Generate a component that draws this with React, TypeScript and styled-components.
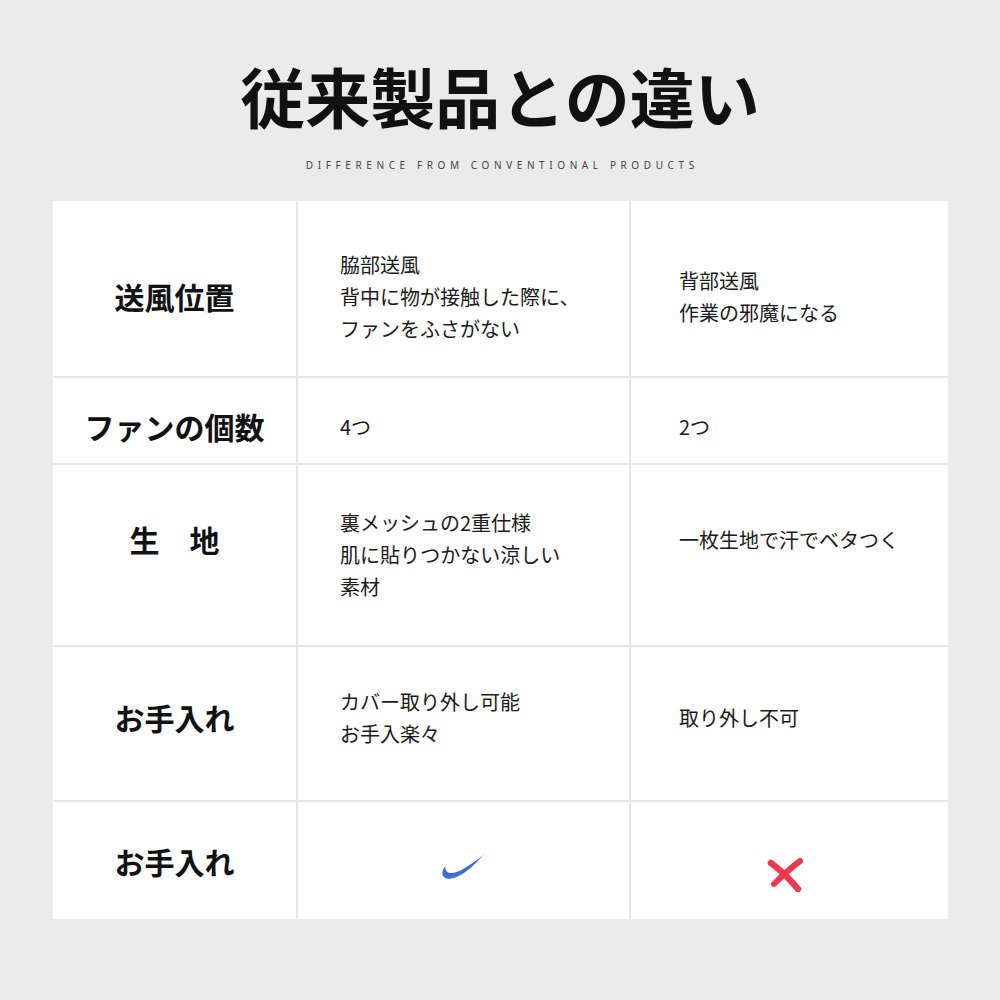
import React from "react";
import styled, { createGlobalStyle } from "styled-components";

const Global = createGlobalStyle`
  html, body { margin: 0; padding: 0; background: #ebebeb; }
  body { font-family: "Noto Sans CJK JP", "Noto Sans", sans-serif; }
`;

const Page = styled.div`
  width: 1000px;
  height: 1000px;
  background: #ebebeb;
  display: flex;
  flex-direction: column;
  align-items: center;
  padding-top: 63px;
  box-sizing: border-box;
`;

const Title = styled.h1`
  margin: 0;
  font-family: "Noto Sans CJK JP", sans-serif;
  font-weight: 700;
  font-size: 65px;
  line-height: 65px;
  color: #111;
`;

const Subtitle = styled.div`
  margin-top: 32px;
  font-family: "Noto Sans", "Liberation Sans", sans-serif;
  font-size: 10px;
  line-height: 11px;
  letter-spacing: 4.6px;
  color: #444;
  padding-left: 4.6px;
`;

const Table = styled.div`
  margin-top: 30px;
  display: grid;
  grid-template-columns: 243px 331px 317px;
  grid-template-rows: 175px 85px 180px 153px 117px;
  gap: 2px;
  background: #e6e6e6;
  width: 895px;
  align-self: flex-start;
  margin-left: 53px;
`;

const Cell = styled.div<{ $shift: number; $pad: number; $center?: boolean }>`
  background: #fff;
  display: flex;
  align-items: center;
  justify-content: ${(p) => (p.$center ? "center" : "flex-start")};
  padding-left: ${(p) => p.$pad}px;
  padding-top: ${(p) => (p.$shift > 0 ? p.$shift * 2 : 0)}px;
  padding-bottom: ${(p) => (p.$shift < 0 ? -p.$shift * 2 : 0)}px;
  box-sizing: border-box;
`;

const Label = styled.div`
  font-family: "Noto Sans CJK JP", sans-serif;
  font-weight: 700;
  font-size: 30px;
  line-height: 36px;
  color: #111;
  text-align: center;
`;

const Body = styled.div`
  font-family: "Noto Sans CJK JP", sans-serif;
  font-weight: 400;
  font-size: 20px;
  line-height: 32px;
  color: #1a1a1a;
  white-space: pre-line;
`;

const Check = () => (
  <svg width="44" height="28" viewBox="0 0 44 28">
    <path
      d="M43 0.5 C35 9 23 22 11 24.5 C5 25.5 0.5 23.5 1.5 17.5 C2 15.5 3 13.5 4.5 12 C3.8 17 6.5 19.5 11.5 19 C20 18 32 9 43 0.5 Z"
      fill="#3b6fd3"
    />
  </svg>
);

const Cross = () => (
  <svg width="40" height="36" viewBox="0 0 40 36">
    <path d="M4 7 C12 13 22 22 31 33" stroke="#ea3a4f" strokeWidth="6.5" strokeLinecap="round" fill="none" />
    <path d="M33 5 C25 11 16 19 7 28" stroke="#ea3a4f" strokeWidth="6" strokeLinecap="round" fill="none" />
  </svg>
);

type Row = {
  label: string;
  shifts: [number, number, number];
  a: React.ReactNode;
  b: React.ReactNode;
  icons?: boolean;
};

const rows: Row[] = [
  {
    label: "送風位置",
    shifts: [7.5, 8.5, 8.5],
    a: "脇部送風\n背中に物が接触した際に、\nファンをふさがない",
    b: "背部送風\n作業の邪魔になる",
  },
  { label: "ファンの個数", shifts: [5.5, 6.5, 6.5], a: "4つ", b: "2つ" },
  {
    label: "生　地",
    shifts: [-16, 0, -15],
    a: "裏メッシュの2重仕様\n肌に貼りつかない涼しい\n素材",
    b: "一枚生地で汗でベタつく",
  },
  {
    label: "お手入れ",
    shifts: [-6.5, -5.5, -5.5],
    a: "カバー取り外し可能\nお手入楽々",
    b: "取り外し不可",
  },
  { label: "お手入れ", shifts: [0.5, 7.5, 13], a: null, b: null, icons: true },
];

export default function App() {
  return (
    <>
      <Global />
      <Page>
        <Title>従来製品との違い</Title>
        <Subtitle>DIFFERENCE FROM CONVENTIONAL PRODUCTS</Subtitle>
        <Table>
          {rows.map((r, i) => (
            <React.Fragment key={i}>
              <Cell $shift={r.shifts[0]} $pad={0} $center>
                <Label>{r.label}</Label>
              </Cell>
              {r.icons ? (
                <>
                  <Cell $shift={r.shifts[1]} $pad={143}>
                    <Check />
                  </Cell>
                  <Cell $shift={r.shifts[2]} $pad={136}>
                    <Cross />
                  </Cell>
                </>
              ) : (
                <>
                  <Cell $shift={r.shifts[1]} $pad={42}>
                    <Body>{r.a}</Body>
                  </Cell>
                  <Cell $shift={r.shifts[2]} $pad={48}>
                    <Body>{r.b}</Body>
                  </Cell>
                </>
              )}
            </React.Fragment>
          ))}
        </Table>
      </Page>
    </>
  );
}
